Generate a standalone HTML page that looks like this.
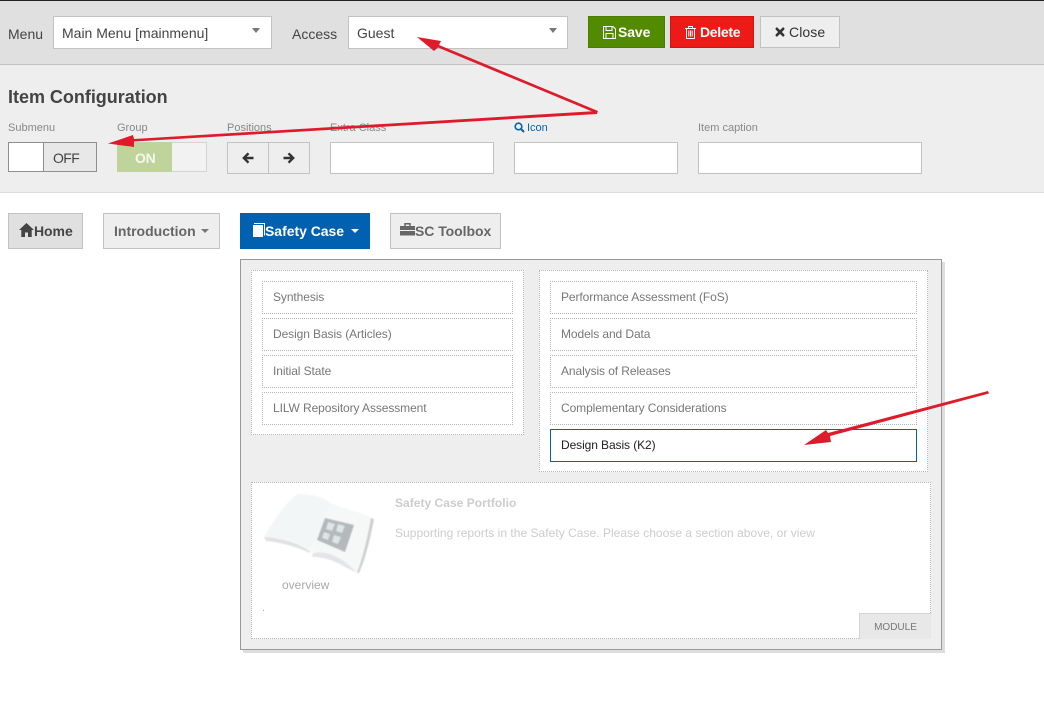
<!DOCTYPE html>
<html>
<head>
<meta charset="utf-8">
<style>
html,body{margin:0;padding:0;background:#fff}
body{width:1044px;height:714px;position:relative;overflow:hidden;font-family:"Liberation Sans",sans-serif;color:#444}
.a{position:absolute;box-sizing:border-box}
.t{position:absolute;white-space:nowrap;line-height:1}
.in{position:absolute;box-sizing:border-box;background:#fff;border:1px solid #c2c2c2}
.lab{position:absolute;white-space:nowrap;font-size:11px;line-height:1;color:#888}
.btn{position:absolute;box-sizing:border-box;font-size:14px;font-weight:bold;text-align:center}
.item{position:absolute;box-sizing:border-box;background:#fff;border:1px dotted #b5b5b5;font-size:12px;letter-spacing:-.09px;color:#777;height:33px;line-height:30px;padding-left:10px;white-space:nowrap}
.caret{position:absolute;width:0;height:0;border-left:4px solid transparent;border-right:4px solid transparent;border-top:5px solid #777}
svg{position:absolute;overflow:visible}
</style>
</head>
<body>
<div class="a" style="left:0;top:0;width:1044px;height:1px;background:#222"></div>
<div class="a" style="left:0;top:1px;width:1044px;height:64px;background:#e0e0e0;border-bottom:1px solid #c2c2c2"></div>
<div class="a" style="left:0;top:65px;width:1044px;height:128px;background:#eee;border-bottom:1px solid #ddd"></div>

<div class="t" style="left:8px;top:27px;font-size:14px">Menu</div>
<div class="in" style="left:53px;top:16px;width:219px;height:33px"></div>
<div class="t" style="left:62px;top:26px;font-size:14px">Main Menu [mainmenu]</div>
<div class="caret" style="left:252px;top:28px"></div>

<div class="t" style="left:292px;top:27px;font-size:14px">Access</div>
<div class="in" style="left:348px;top:16px;width:220px;height:33px"></div>
<div class="t" style="left:357px;top:26px;font-size:14px">Guest</div>
<div class="caret" style="left:549px;top:28px"></div>

<div class="btn" style="left:588px;top:16px;width:77px;height:32px;background:#538b00;border:1px solid #4a7c00;color:#fff"></div>
<svg style="left:603px;top:26px" width="13" height="13" viewBox="0 0 13 13"><path d="M.5.5h9.500l2.500 2.500v9.500h-12z M3 .5v4h6v-4 M3 12.500v-5h7v5" fill="none" stroke="#fff" stroke-width="1"/></svg>
<div class="t" style="left:618px;top:25px;font-size:14px;font-weight:bold;letter-spacing:-.1px;color:#fff">Save</div>

<div class="btn" style="left:670px;top:16px;width:84px;height:32px;background:#ec1b17;border:1px solid #cf1512"></div>
<svg style="left:685px;top:26px" width="11" height="13" viewBox="0 0 11 13"><path d="M0 2.500h11M3.500 2.500v-2h4v2M1.500 2.500v10h8v-10M3.800 4.500v6M5.500 4.500v6M7.200 4.500v6" fill="none" stroke="#fff" stroke-width="1"/></svg>
<div class="t" style="left:700px;top:25px;font-size:14px;font-weight:bold;letter-spacing:-.3px;color:#fff">Delete</div>

<div class="btn" style="left:760px;top:16px;width:80px;height:32px;background:#eee;border:1px solid #c2c2c2"></div>
<svg style="left:775px;top:27px" width="10" height="10" viewBox="0 0 10 10"><path d="M1.800 1.800l6.400 6.400M8.200 1.800l-6.400 6.400" stroke="#333" stroke-width="2.600" stroke-linecap="round"/></svg>
<div class="t" style="left:789px;top:25px;font-size:14px;letter-spacing:.1px;color:#333">Close</div>

<div class="t" style="left:8px;top:88px;font-size:18px;font-weight:bold;letter-spacing:-.02px;color:#444">Item Configuration</div>

<div class="lab" style="left:8px;top:123px">Submenu</div>
<div class="lab" style="left:117px;top:123px">Group</div>
<div class="lab" style="left:227px;top:123px">Positions</div>
<div class="lab" style="left:330px;top:123px">Extra Class</div>
<svg style="left:514px;top:122px" width="11" height="11" viewBox="0 0 11 11"><circle cx="4.500" cy="4.500" r="3.300" fill="none" stroke="#0a62ae" stroke-width="1.600"/><path d="M7 7l3 3" stroke="#0a62ae" stroke-width="2"/></svg>
<div class="lab" style="left:527px;top:123px;color:#0a62ae">Icon</div>
<div class="lab" style="left:698px;top:123px">Item caption</div>

<div class="a" style="left:8px;top:142px;width:89px;height:30px;background:#e8e8e8;border:1px solid #8f8f8f"></div>
<div class="a" style="left:9px;top:143px;width:35px;height:28px;background:#fff;border-right:1px solid #8f8f8f"></div>
<div class="t" style="left:53px;top:151px;font-size:14px;letter-spacing:-.6px;color:#444">OFF</div>

<div class="a" style="left:117px;top:142px;width:90px;height:30px;background:#f2f2f2;border:1px solid #d4d4d4"></div>
<div class="a" style="left:117px;top:142px;width:55px;height:30px;background:#bfd49b"></div>
<div class="t" style="left:135px;top:151px;font-size:14px;font-weight:bold;letter-spacing:-.3px;color:#f4f7ec">ON</div>

<div class="a" style="left:227px;top:142px;width:83px;height:32px;background:#eee;border:1px solid #c2c2c2"></div>
<div class="a" style="left:268px;top:142px;width:1px;height:32px;background:#c2c2c2"></div>
<svg style="left:242px;top:152px" width="12" height="12" viewBox="0 0 12 12"><path d="M11.500 6H2M6.500 1.300L1.800 6l4.700 4.700" fill="none" stroke="#333" stroke-width="2.400"/></svg>
<svg style="left:283px;top:152px" width="12" height="12" viewBox="0 0 12 12"><path d="M.5 6H10M5.500 1.300L10.200 6l-4.700 4.700" fill="none" stroke="#333" stroke-width="2.400"/></svg>

<div class="in" style="left:330px;top:142px;width:164px;height:32px"></div>
<div class="in" style="left:514px;top:142px;width:164px;height:32px"></div>
<div class="in" style="left:698px;top:142px;width:224px;height:32px"></div>

<div class="a" style="left:8px;top:213px;width:75px;height:36px;background:#e0e0e0;border:1px solid #c2c2c2"></div>
<svg style="left:19px;top:223px" width="15" height="14" viewBox="0 0 15 14"><path d="M7.500 0L0 7h2.300v7h3.700v-4.500h3v4.500h3.700v-7H15z" fill="#444"/></svg>
<div class="t" style="left:34px;top:224px;font-size:14px;font-weight:bold;letter-spacing:-.05px;color:#444">Home</div>

<div class="a" style="left:103px;top:213px;width:117px;height:36px;background:#eee;border:1px solid #c2c2c2"></div>
<div class="t" style="left:114px;top:224px;font-size:14px;font-weight:bold;color:#666">Introduction</div>
<div class="caret" style="left:201px;top:229px;border-top-width:4px"></div>

<div class="a" style="left:240px;top:213px;width:130px;height:36px;background:#0061b0"></div>
<svg style="left:252px;top:223px" width="13" height="14" viewBox="0 0 13 14"><path d="M1 2h10v12H1z" fill="#fff"/><path d="M2 .5h10.500v12" fill="none" stroke="#fff" stroke-width="1"/></svg>
<div class="t" style="left:265px;top:224px;font-size:14px;font-weight:bold;letter-spacing:-.03px;color:#fff">Safety Case</div>
<div class="caret" style="left:351px;top:229px;border-top-width:4px;border-top-color:#fff"></div>

<div class="a" style="left:390px;top:213px;width:111px;height:36px;background:#eee;border:1px solid #c2c2c2"></div>
<svg style="left:400px;top:223px" width="15" height="13" viewBox="0 0 15 13"><path d="M5 3V.8h5V3" fill="none" stroke="#666" stroke-width="1.500"/><path d="M0 3h15v4H0zM0 8h15v4.500H0z" fill="#666"/></svg>
<div class="t" style="left:415px;top:224px;font-size:14px;font-weight:bold;letter-spacing:-.05px;color:#666">SC Toolbox</div>

<div class="a" style="left:243px;top:262px;width:702px;height:391px;background:#ddd"></div>
<div class="a" style="left:240px;top:259px;width:702px;height:391px;background:#eee;border:1px solid #999"></div>

<div class="a" style="left:251px;top:270px;width:273px;height:165px;background:#fff;border:1px dotted #b5b5b5"></div>
<div class="item" style="left:262px;top:281px;width:251px">Synthesis</div>
<div class="item" style="left:262px;top:318px;width:251px">Design Basis (Articles)</div>
<div class="item" style="left:262px;top:355px;width:251px">Initial State</div>
<div class="item" style="left:262px;top:392px;width:251px">LILW Repository Assessment</div>

<div class="a" style="left:539px;top:270px;width:389px;height:202px;background:#fff;border:1px dotted #b5b5b5"></div>
<div class="item" style="left:550px;top:281px;width:367px">Performance Assessment (FoS)</div>
<div class="item" style="left:550px;top:318px;width:367px">Models and Data</div>
<div class="item" style="left:550px;top:355px;width:367px">Analysis of Releases</div>
<div class="item" style="left:550px;top:392px;width:367px">Complementary Considerations</div>
<div class="item" style="left:550px;top:429px;width:367px;border:1px solid #0061b0;color:#222">Design Basis (K2)</div>

<div class="a" style="left:251px;top:482px;width:680px;height:157px;background:#fff;border:1px dotted #b5b5b5"></div>

<svg style="left:255px;top:485px" width="130" height="95" viewBox="0 0 130 95">
<g style="filter:blur(.6px)">
<path d="M9 52C20 33 32 16 43 9C55 9 68 12 75 17C73 35 62 52 55 65C42 56 25 53 9 52Z" fill="#f3f6f7"/>
<path d="M75 17C85 24 103 25 117 33C113 55 108 72 103 88C92 80 75 66 55 67C62 52 70 35 75 17Z" fill="#f6f8f8"/>
<path d="M116 33L119 34C115 55 110 75 104 88L102 88C108 72 112 55 116 33Z" fill="#cfcfcf"/>
<path d="M9 52C25 53 42 57 55 66L55 68C42 62 25 57 11 56Z" fill="#dfe1e2"/>
<path d="M58 68C75 65 90 75 102 88L90 82C80 76 70 72 57 72Z" fill="#e4e5e6"/>
<path d="M70 33L99 40L90 67L62 55Z" fill="#b4babb"/>
<path d="M73 37l7 2-3 7-6-2zM83 39l7 2-3 7-6-2zM69 47l6 2-2 6-6-2zM79 50l7 2-3 7-6-2z" fill="#dfe4e5"/>
</g>
</svg>
<div class="t" style="left:282px;top:579px;font-size:12px;color:#aaa">overview</div>
<div class="t" style="left:262px;top:603px;font-size:11px;color:#aaa">.</div>
<div class="t" style="left:395px;top:497px;font-size:12px;font-weight:bold;letter-spacing:.03px;color:#ccc">Safety Case Portfolio</div>
<div class="t" style="left:395px;top:527px;font-size:12px;letter-spacing:.03px;color:#ccc">Supporting reports in the Safety Case. Please choose a section above, or view</div>
<div class="a" style="left:859px;top:613px;width:72px;height:26px;background:#e8e8e8;border:1px solid #d4d4d4;border-bottom:0;border-right:0;font-size:10px;color:#777;text-align:center;line-height:27px">MODULE</div>

<svg style="left:0;top:0" width="1044" height="714" viewBox="0 0 1044 714">
<g fill="#dd1b2a" stroke="none">
<path d="M598 111L597 113.500L438 47.500L434 51L417 37L441 41L439 45Z"/>
<path d="M597 111L597 114L134 141.500L134 147L108 143.500L133 135L134 139Z"/>
<path d="M988 391L989 393.500L830 436L831 442L804 445L826 430L828 433Z"/>
</g>
</svg>
</body>
</html>
